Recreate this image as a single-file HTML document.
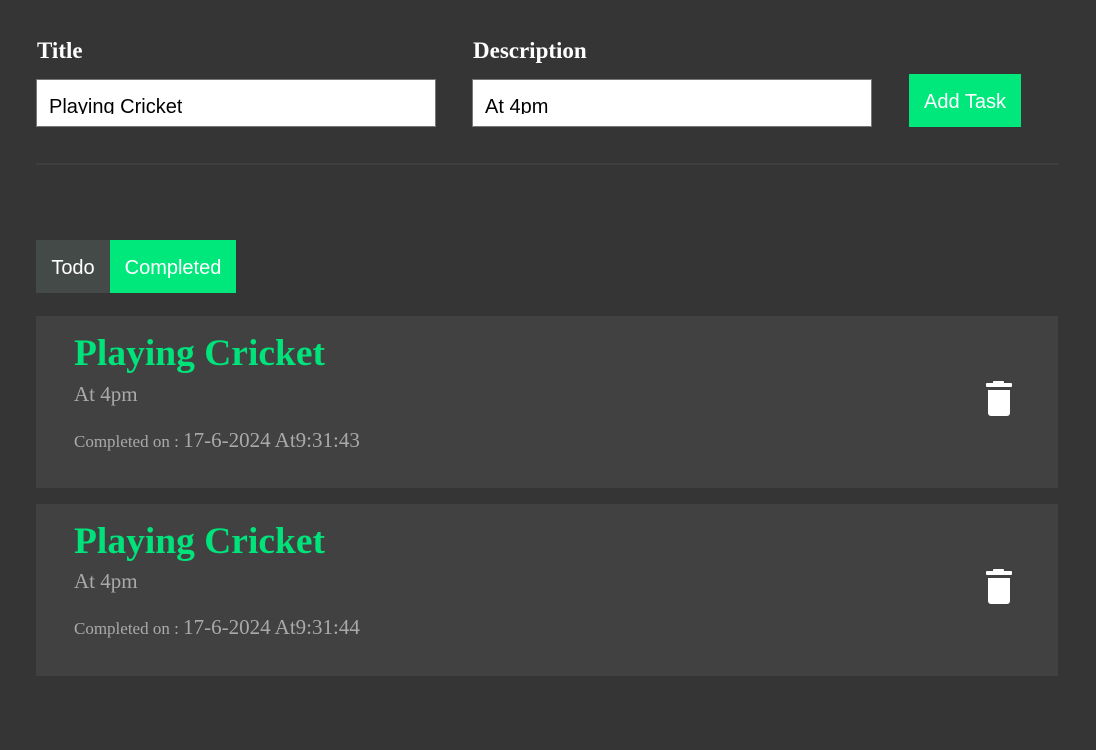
<!DOCTYPE html>
<html><head><style>
body{margin:0;background:#353535;width:1096px;height:750px;position:relative;overflow:hidden;font-family:"Liberation Serif",serif}
.abs{position:absolute}
.lbl{color:#fff;font-weight:bold;font-size:23px}
.inp{background:#fff;border:1px solid #777;box-sizing:border-box;height:48px;width:400px;overflow:hidden;font-family:"Liberation Sans",sans-serif;font-size:20px;color:#000;padding-left:12px}
.inp span{position:absolute;top:16px;left:12px;height:18px;overflow:hidden;line-height:22px}
.card{left:36px;width:1022px;height:172px;background:#414141}
.t{left:38px;color:#00e27a;font-weight:bold;font-size:37.5px}
.d{left:38px;color:#a9a9a9;font-size:21px}
.c{left:38px;color:#a9a9a9;font-size:21px}
.c small{font-size:17px}
</style></head><body>
<div class="abs lbl" style="left:37px;top:38px">Title</div>
<div class="abs lbl" style="left:473px;top:38px">Description</div>
<div class="abs inp" style="left:36px;top:79px"><span>Playing Cricket</span></div>
<div class="abs inp" style="left:472px;top:79px"><span>At 4pm</span></div>
<div class="abs" style="left:909px;top:74px;width:112px;height:53px;background:#00e87c;color:#fff;font-family:'Liberation Sans',sans-serif;font-size:20px;line-height:56px;text-align:center">Add Task</div>
<div class="abs" style="left:36px;top:163px;width:1022px;height:2px;background:#3f3f3f"></div>
<div class="abs" style="left:36px;top:240px;width:74px;height:53px;background:#434a48;color:#fff;font-family:'Liberation Sans',sans-serif;font-size:20px;line-height:57px;text-align:center">Todo</div>
<div class="abs" style="left:110px;top:240px;width:126px;height:53px;background:#00e87c;color:#fff;font-family:'Liberation Sans',sans-serif;font-size:20px;line-height:57px;text-align:center">Completed</div>

<div class="abs card" style="top:316px">
<div class="abs t" style="top:16px">Playing Cricket</div>
<div class="abs d" style="top:66px">At 4pm</div>
<div class="abs c" style="top:112px"><small>Completed on : </small>17-6-2024 At9:31:43</div>
<svg class="abs" style="left:950px;top:65px" width="26" height="36" viewBox="0 0 26 36"><rect x="7" y="0" width="11" height="3" rx="1" fill="#fff"/><rect x="0" y="2" width="26" height="4" rx="1" fill="#fff"/><path d="M2 9h22v23a3 3 0 0 1-3 3H5a3 3 0 0 1-3-3z" fill="#fff"/></svg>
</div>
<div class="abs card" style="top:504px">
<div class="abs t" style="top:16px">Playing Cricket</div>
<div class="abs d" style="top:65px">At 4pm</div>
<div class="abs c" style="top:111px"><small>Completed on : </small>17-6-2024 At9:31:44</div>
<svg class="abs" style="left:950px;top:65px" width="26" height="36" viewBox="0 0 26 36"><rect x="7" y="0" width="11" height="3" rx="1" fill="#fff"/><rect x="0" y="2" width="26" height="4" rx="1" fill="#fff"/><path d="M2 9h22v23a3 3 0 0 1-3 3H5a3 3 0 0 1-3-3z" fill="#fff"/></svg>
</div>
</body></html>
